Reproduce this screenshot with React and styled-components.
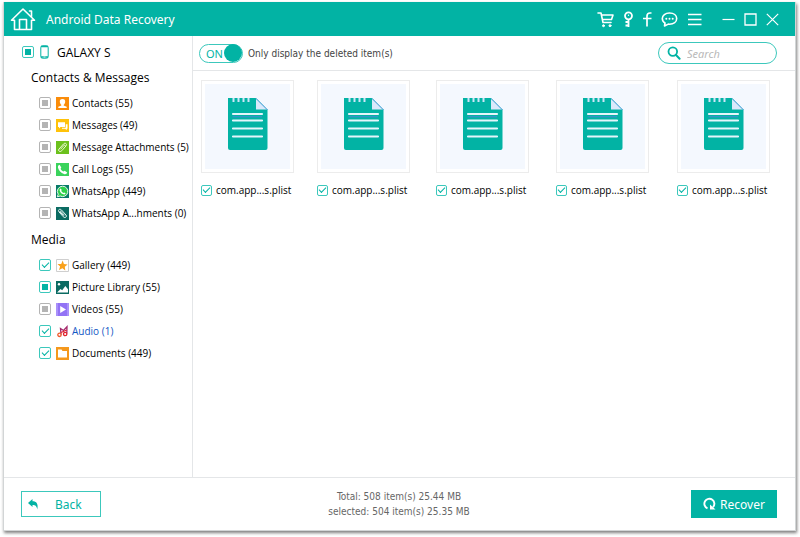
import React from 'react';
import styled, { createGlobalStyle, css } from 'styled-components';

const COLORS = {
  primary: '#02b3a4',
  primaryLight: '#3cc8bc',
  white: '#fff',
  text: '#000',
  muted: '#666',
  link: '#1257c4',
  line: '#e4e6e8',
  gray: '#b4b4b4',
};

const FONTS = {
  ui: "'Noto Sans', 'Open Sans', sans-serif",
  label: "'Open Sans', 'Noto Sans', sans-serif",
  status: "'DejaVu Sans Condensed', 'DejaVu Sans', sans-serif",
};

const CONTACT_ITEMS = [
  { id: 'contacts', label: 'Contacts (55)', state: 'none' },
  { id: 'messages', label: 'Messages (49)', state: 'none' },
  { id: 'attachments', label: 'Message Attachments (5)', state: 'none' },
  { id: 'calls', label: 'Call Logs (55)', state: 'none' },
  { id: 'whatsapp', label: 'WhatsApp (449)', state: 'none' },
  { id: 'whatsappAttachments', label: 'WhatsApp A...hments (0)', state: 'none' },
];

const MEDIA_ITEMS = [
  { id: 'gallery', label: 'Gallery (449)', state: 'checked' },
  { id: 'pictures', label: 'Picture Library (55)', state: 'partial' },
  { id: 'videos', label: 'Videos (55)', state: 'none' },
  { id: 'audio', label: 'Audio (1)', state: 'checked', active: true },
  { id: 'documents', label: 'Documents (449)', state: 'checked' },
];

const FILES = [1, 2, 3, 4, 5];

const App = () => {
  return (
    <>
      <GlobalStyle />
      <Window>
        <TitleBar>
          <HomeLink href="/" aria-label="Home">
            <HomeIcon />
          </HomeLink>
          <Title>Android Data Recovery</Title>
          <Tools>
            <IconButton aria-label="Buy"><CartIcon /></IconButton>
            <IconButton aria-label="Register"><KeyIcon /></IconButton>
            <IconButton aria-label="Facebook"><FacebookIcon /></IconButton>
            <IconButton aria-label="Feedback"><ChatIcon /></IconButton>
            <IconButton aria-label="Menu"><MenuIcon /></IconButton>
          </Tools>
          <WindowControls>
            <IconButton aria-label="Minimize"><MinimizeIcon /></IconButton>
            <IconButton aria-label="Maximize"><MaximizeIcon /></IconButton>
            <IconButton aria-label="Close"><CloseIcon /></IconButton>
          </WindowControls>
        </TitleBar>

        <Body>
          <Sidebar>
            <Device>
              <TickBox state="partial" />
              <PhoneIcon />
              GALAXY S
            </Device>
            <Category title="Contacts & Messages" items={CONTACT_ITEMS} />
            <Category title="Media" items={MEDIA_ITEMS} />
          </Sidebar>

          <Main>
            <Toolbar>
              <DeletedSwitch />
              <SearchBox>
                <SearchIcon />
                <SearchInput type="text" placeholder="Search" aria-label="Search" />
              </SearchBox>
            </Toolbar>
            <FileGrid>
              {FILES.map((id) => (
                <File key={id}>
                  <Thumb>
                    <NoteIcon />
                  </Thumb>
                  <FileLabel>
                    <TickBox state="checked" small />
                    com.app...s.plist
                  </FileLabel>
                </File>
              ))}
            </FileGrid>
          </Main>
        </Body>

        <Footer>
          <BackButton>
            <BackIcon />
            <span>Back</span>
          </BackButton>
          <Summary>
            <p>Total: 508 item(s) 25.44 MB</p>
            <p>selected: 504 item(s) 25.35 MB</p>
          </Summary>
          <RecoverButton>
            <RecoverIcon />
            Recover
          </RecoverButton>
        </Footer>
      </Window>
    </>
  );
};

const TickBox = ({ state, small, ...delegated }) => {
  const ref = React.useRef(null);

  React.useEffect(() => {
    ref.current.indeterminate = state !== 'checked';
  }, [state]);

  return (
    <Tick
      ref={ref}
      type="checkbox"
      defaultChecked={state === 'checked'}
      $muted={state === 'none'}
      $small={small}
      {...delegated}
    />
  );
};

const Category = ({ title, items }) => (
  <section>
    <CategoryTitle>{title}</CategoryTitle>
    <CategoryList>
      {items.map(({ id, label, state, active }) => (
        <li key={id}>
          <CategoryLabel $active={active}>
            <TickBox state={state} />
            <ItemIcon id={id} />
            {label}
          </CategoryLabel>
        </li>
      ))}
    </CategoryList>
  </section>
);

const DeletedSwitch = () => {
  const [on, setOn] = React.useState(true);

  return (
    <SwitchRow>
      <Switch
        id="deleted-only"
        role="switch"
        aria-checked={on}
        $on={on}
        onClick={() => setOn(!on)}
      >
        <span>{on ? 'ON' : 'OFF'}</span>
        <Knob />
      </Switch>
      <label htmlFor="deleted-only">Only display the deleted item(s)</label>
    </SwitchRow>
  );
};

/* Icons */
const HomeIcon = () => (
  <svg width="26" height="24" viewBox="0 0 26 24" fill="none" stroke="#fff" strokeWidth="1.6" strokeLinejoin="round" strokeLinecap="round">
    <path d="M1.5 13.200 L13 2 L24.500 13.200 H21.500 V22.500 H4.500 V13.200 Z" />
    <path d="M9.500 22 V12.500 H16.500 V22" />
    <path d="M19.500 4 H21.500 V9.500" />
  </svg>
);

const CartIcon = () => (
  <svg width="17" height="17" viewBox="0 0 17 17" fill="none" stroke="#fff" strokeWidth="1.6" strokeLinejoin="round" strokeLinecap="round">
    <path d="M1 2 H4 L6 11.500 H14 M4.500 4 H16 L14.500 8.500 H6" />
    <circle cx="6.500" cy="14.700" r="1" fill="#fff" strokeWidth="1" />
    <circle cx="13" cy="14.700" r="1" fill="#fff" strokeWidth="1" />
  </svg>
);

const KeyIcon = () => (
  <svg width="10" height="17" viewBox="0 0 10 17" fill="none" stroke="#fff" strokeWidth="1.8">
    <circle cx="5.500" cy="4.800" r="3.500" />
    <path d="M5.500 8 V16 M5.500 11 H2.500 M5.500 14.500 H2.500" />
    <circle cx="5.500" cy="4.200" r=".7" fill="#fff" stroke="none" />
  </svg>
);

const FacebookIcon = () => (
  <svg width="10" height="17" viewBox="0 0 10 17" fill="none" stroke="#fff" strokeWidth="1.7">
    <path d="M9.500 2 H8 Q5 2 5 5 V15.500 M1 7.500 H9.500" />
  </svg>
);

const ChatIcon = () => (
  <svg width="17" height="17" viewBox="0 0 17 17" fill="none" stroke="#fff" strokeWidth="1.6" strokeLinejoin="round">
    <path d="M8.500 2 C12.800 2 15.700 4.400 15.700 7.600 C15.700 10.900 12.600 13.200 8.500 13.200 L7.300 13.100 L3.500 15 L4 12 C2.200 11 1.300 9.400 1.300 7.600 C1.300 4.400 4.400 2 8.500 2 Z" />
    <g fill="#fff" stroke="none">
      <circle cx="5.300" cy="7.700" r="1" />
      <circle cx="8.500" cy="7.700" r="1" />
      <circle cx="11.700" cy="7.700" r="1" />
    </g>
  </svg>
);

const MenuIcon = () => (
  <svg width="15" height="17" viewBox="0 0 15 17" stroke="#fff" strokeWidth="1.7">
    <path d="M1 3.500 H14.500 M1 8.500 H14.500 M1 13.500 H14.500" />
  </svg>
);

const MinimizeIcon = () => (
  <svg width="13" height="13" viewBox="0 0 13 13" stroke="#fff" strokeWidth="1.2">
    <path d="M0.500 6.500 H12.500" />
  </svg>
);

const MaximizeIcon = () => (
  <svg width="13" height="13" viewBox="0 0 13 13" fill="none" stroke="#fff" strokeWidth="1.3">
    <path d="M1 1 H12 V12 H1 Z" />
  </svg>
);

const CloseIcon = () => (
  <svg width="13" height="13" viewBox="0 0 13 13" stroke="#fff" strokeWidth="1.2">
    <path d="M0.800 0.800 L12.200 12.200 M12.200 0.800 L0.800 12.200" />
  </svg>
);

const PhoneIcon = () => (
  <svg width="9" height="14" viewBox="0 0 9 14" fill="none" stroke={COLORS.primary}>
    <rect x=".8" y=".8" width="7.400" height="12.400" rx="1.600" strokeWidth="1" />
    <path d="M1 1.500 H8 M1 12 H8" strokeWidth="1.600" />
    <path d="M3.500 12 H5.500" stroke="#fff" strokeWidth=".8" />
  </svg>
);

const SearchIcon = () => (
  <svg width="14" height="14" viewBox="0 0 14 14" fill="none" stroke={COLORS.primary} strokeWidth="1.8" strokeLinecap="round">
    <circle cx="5.800" cy="5.600" r="4.300" />
    <path d="M9 9 L12.600 12.800" strokeWidth="2" />
  </svg>
);

const NoteIcon = () => (
  <svg width="40" height="52" viewBox="0 0 40 52">
    <path d="M0 0 H28 L39.500 11.500 V50 Q39.500 52 37.500 52 H2 Q0 52 0 50 Z" fill={COLORS.primary} />
    <path d="M28 0.500 V11.500 H39.500 Z" fill="#d9e9fb" />
    <path d="M28 0.500 L39.500 12" stroke="#4f9fdc" fill="none" />
    <path d="M5.500 0 V4 M10.500 0 V4 M15.500 0 V4 M20.500 0 V4" stroke="#cfe6fa" strokeWidth="2" />
    <path d="M4.500 18.700 H34" stroke="#3c92cc" strokeWidth="1.200" />
    <path d="M5 16 H34 M5 22.500 H34 M5 30.500 H34 M5 38.500 H34" stroke="#e4f5fb" strokeWidth="2.200" strokeLinecap="round" />
  </svg>
);

const BackIcon = () => (
  <svg width="11" height="11" viewBox="0 0 11 11" fill={COLORS.primary}>
    <path d="M0 4 L4.500 0 V2.200 C8.500 2.200 10.500 4.800 9.300 10.500 C8.800 7.200 7.500 6 4.500 6 V8 Z" />
  </svg>
);

const RecoverIcon = () => (
  <svg width="13" height="14" viewBox="0 0 13 14">
    <path d="M4.500 11.400 A5 5 0 1 1 10 10.200" fill="none" stroke="#fff" strokeWidth="1.9" />
    <path d="M12.500 12.500 H7 V7.500 Z" fill="#fff" />
  </svg>
);

const ITEM_ICONS = {
  contacts: (
    <>
      <path d="M0 0 H13 V13 H0 Z" fill="#fa8c0a" />
      <path d="M6.500 2 C8.500 2 9.400 3.300 9.200 4.900 C9 6.500 8.200 7.200 7.700 7.700 V8.500 L10.700 9.700 V11 H2.300 V9.700 L5.300 8.500 V7.700 C4.800 7.200 4 6.500 3.800 4.900 C3.600 3.300 4.500 2 6.500 2 Z" fill="#fff" />
    </>
  ),
  messages: (
    <>
      <path d="M0 0 H13 V13 H0 Z" fill="#ffc20a" />
      <path d="M2 3.200 H9 V8 H4.500 L3 9.600 V8 H2 Z" fill="#fff" />
      <path d="M9.700 5.300 H11.500 V9.800 H10.700 V11.200 L9.200 9.800 H6 V8.700 H9.700 Z" fill="#fff" />
    </>
  ),
  attachments: (
    <>
      <path d="M0 0 H13 V13 H0 Z" fill="#6cc11d" />
      <path d="M4.500 8.300 L8.200 4.200 M3 8 L7.500 3 C9.300 1.200 11.500 3 10 4.900 L5.800 9.700 C4 11.600 1.600 9.800 3 8 M8.200 4.200 C9 3.600 9.400 4.500 8.900 5" fill="none" stroke="#effad9" />
    </>
  ),
  calls: (
    <>
      <path d="M0 0 H13 V13 H0 Z" fill="#3ad35c" />
      <path d="M3.600 1.800 L5.300 4.400 L4.600 5.700 C5.200 7 6.200 8 7.400 8.500 L8.700 7.700 L11.200 9.500 C10.700 11 9.500 11.500 8 11 C5 10 2.700 7.500 2 4.800 C1.700 3.300 2.300 2.200 3.600 1.800 Z" fill="#fff" />
    </>
  ),
  whatsapp: (
    <>
      <path d="M0 0 H13 V13 H0 Z" fill="#087a68" />
      <path d="M6.600 1.200 A5.200 5.200 0 1 1 4.200 11 L1.300 11.800 L2.200 9.200 A5.200 5.200 0 0 1 6.600 1.200 Z" fill="#2ed04b" stroke="#fff" strokeWidth=".9" />
      <path d="M4.800 3.500 L5.700 5 L5.200 6 L7.200 8 L8.300 7.400 L9.700 8.400 C9 9.700 7.900 9.600 6.700 9 C5 8.200 4 6.800 3.700 5.400 C3.600 4.400 4.100 3.700 4.800 3.500 Z" fill="#fff" />
    </>
  ),
  whatsappAttachments: (
    <>
      <path d="M0 0 H13 V13 H0 Z" fill="#0b6b62" />
      <path d="M8.500 8.300 L4.800 4.200 M10 8 L5.500 3 C3.700 1.200 1.500 3 3 4.900 L7.200 9.700 C9 11.600 11.400 9.800 10 8 M4.800 4.200 C4 3.600 3.600 4.500 4.100 5 L7.500 8.700" fill="none" stroke="#e8f5f2" />
    </>
  ),
  gallery: (
    <>
      <path d="M.5 .5 H12.500 V12.500 H.5 Z" fill="#fff" stroke="#cfcfcf" />
      <path d="M6.700 1.500 L7.900 4.900 L11.600 5.600 L8.800 7.700 L9.300 11.400 L6.400 9.300 L3 11 L4.100 7.500 L1.500 5 L5.200 4.900 Z" fill="#f9a11b" />
    </>
  ),
  pictures: (
    <>
      <path d="M0 0 H13 V13 H0 Z" fill="#0b6b62" />
      <path d="M1 11.500 L4.500 8 L6.200 9.200 L9.300 5 L12 8.200 V11.500 Z" fill="#fff" />
      <circle cx="3" cy="3.200" r="1.200" fill="#fff" />
    </>
  ),
  videos: (
    <>
      <path d="M0 0 H13 V13 H0 Z" fill="#9272f5" />
      <path d="M0 0 H2 V13 H0 Z M11 0 H13 V13 H11 Z" fill="#a991fa" />
      <path d="M4.200 3 L10 6.500 L4.200 10 Z" fill="#fff" />
    </>
  ),
  audio: (
    <>
      <path d="M5 9.500 L4.500 3.500 L7.500 5.500 L11 1.800 L10.800 8.500" fill="none" stroke="#a3276c" strokeWidth="1.300" />
      <path d="M5 7.500 L10.800 5" fill="none" stroke="#e0242f" strokeWidth="1.200" />
      <circle cx="3.500" cy="9.800" r="1.700" fill="none" stroke="#f0582a" strokeWidth="1.300" />
      <circle cx="9.200" cy="9" r="1.700" fill="none" stroke="#e0242f" strokeWidth="1.300" />
    </>
  ),
  documents: (
    <>
      <path d="M0 0 H13 V13 H0 Z" fill="#f5981c" />
      <path d="M2 2.500 H5.500 L6.500 4 H11 V10.500 H2 Z" fill="#fff" />
    </>
  ),
};

const ItemIcon = ({ id }) => (
  <svg width="13" height="13" viewBox="0 0 13 13" aria-hidden="true">
    {ITEM_ICONS[id]}
  </svg>
);

const GlobalStyle = createGlobalStyle`
  *, *::before, *::after {
    box-sizing: border-box;
  }

  body {
    margin: 0;
    background: ${COLORS.white};
    color: ${COLORS.text};
    font-family: ${FONTS.ui};
    font-size: 11px;
  }

  h1, h2, p, ul {
    margin: 0;
    padding: 0;
  }

  button, input {
    font: inherit;
  }

  svg {
    display: block;
    flex-shrink: 0;
  }
`;

const Window = styled.div`
  display: flex;
  flex-direction: column;
  min-height: calc(100vh - 8px);
  margin: 2px 4px 6px 3px;
  border: 1px solid #d2d5d6;
  box-shadow: 1px 2px 3px rgba(0, 0, 0, 0.5);
`;

const TitleBar = styled.header`
  display: flex;
  align-items: center;
  height: 34px;
  padding: 0 16px 0 6px;
  margin-top: -1px;
  background: ${COLORS.primary};
  color: ${COLORS.white};
`;

const HomeLink = styled.a`
  margin-right: 10px;
`;

const Title = styled.h1`
  font-size: 12px;
  font-weight: 400;
`;

const Tools = styled.div`
  display: flex;
  align-items: center;
  gap: 9px;
  margin-left: auto;
`;

const WindowControls = styled.div`
  display: flex;
  align-items: center;
  gap: 9px;
  margin-left: 20px;
`;

const IconButton = styled.button`
  padding: 0;
  border: none;
  background: transparent;
  cursor: pointer;
`;

const Body = styled.div`
  display: flex;
  flex: 1;
`;

const Sidebar = styled.nav`
  width: 189px;
  flex-shrink: 0;
  padding-top: 3px;
  border-right: 1px solid ${COLORS.line};
  font-family: ${FONTS.label};
`;

const Device = styled.label`
  display: flex;
  align-items: center;
  gap: 6px;
  height: 26px;
  padding-left: 18px;
  font-size: 12px;

  svg {
    margin-right: 2px;
  }
`;

const CategoryTitle = styled.h2`
  padding-left: 27px;
  font-size: 12px;
  font-weight: 400;
  line-height: 26px;
`;

const CategoryList = styled.ul`
  margin: 1px 0 3px;
  list-style: none;
`;

const CategoryLabel = styled.label`
  display: flex;
  align-items: center;
  height: 22px;
  padding-left: 35px;
  font-size: 10px;
  white-space: nowrap;
  color: ${(p) => (p.$active ? COLORS.link : COLORS.text)};

  svg {
    margin: 0 3px 0 5px;
  }
`;

const Tick = styled.input`
  appearance: none;
  display: grid;
  place-content: center;
  flex-shrink: 0;
  width: 12px;
  height: 12px;
  margin: 0;
  border: 1px solid ${(p) => (p.$muted ? COLORS.gray : COLORS.primaryLight)};
  border-radius: 2px;
  background: ${COLORS.white};

  &:indeterminate::after {
    content: '';
    width: 6px;
    height: 6px;
    background: ${(p) => (p.$muted ? COLORS.gray : COLORS.primary)};
  }

  &:checked:not(:indeterminate)::after {
    content: '';
    width: 7px;
    height: 4px;
    border: solid ${COLORS.primary};
    border-width: 0 0 1px 1px;
    transform: translateY(-1px) rotate(-45deg);
  }

  ${(p) =>
    p.$small &&
    css`
      width: 11px;
      height: 11px;
    `}
`;

const Main = styled.main`
  flex: 1;
  min-width: 0;
`;

const Toolbar = styled.div`
  display: flex;
  align-items: center;
  justify-content: space-between;
  height: 35px;
  padding: 0 18px 0 6px;
  border-bottom: 1px solid ${COLORS.line};
`;

const SwitchRow = styled.div`
  display: flex;
  align-items: center;
  gap: 5px;
  color: #444;
  font-family: ${FONTS.status};
  font-size: 10px;
`;

const Switch = styled.button`
  display: flex;
  flex-direction: ${(p) => (p.$on ? 'row' : 'row-reverse')};
  align-items: center;
  justify-content: space-between;
  width: 44px;
  height: 19px;
  padding: 0 0 0 6px;
  border: 1px solid ${COLORS.primaryLight};
  border-radius: 10px;
  background: ${COLORS.white};
  color: ${COLORS.primary};
  font-family: ${FONTS.ui};
  font-size: 11px;
  cursor: pointer;
`;

const Knob = styled.span`
  width: 18px;
  height: 18px;
  border-radius: 50%;
  background: ${COLORS.primary};
`;

const SearchBox = styled.div`
  display: flex;
  align-items: center;
  gap: 6px;
  width: 119px;
  height: 22px;
  padding: 0 8px;
  border: 1px solid ${COLORS.primaryLight};
  border-radius: 11px;
`;

const SearchInput = styled.input`
  flex: 1;
  min-width: 0;
  padding: 0;
  border: none;
  outline: none;
  background: transparent;

  &::placeholder {
    color: #b9b9b9;
    font-style: italic;
  }
`;

const FileGrid = styled.div`
  display: grid;
  grid-template-columns: 116fr 119fr 120fr 121fr 93px;
  padding: 9px 25px 9px 8px;
`;

const File = styled.div`
  width: 93px;
`;

const Thumb = styled.div`
  display: grid;
  place-content: center;
  height: 93px;
  padding-bottom: 5px;
  border: 1px solid #ececec;
  outline: 3px solid ${COLORS.white};
  outline-offset: -4px;
  background: #f4f8fe;
`;

const FileLabel = styled.label`
  display: flex;
  align-items: center;
  gap: 4px;
  height: 18px;
  margin-top: 8px;
  font-family: ${FONTS.label};
  font-size: 10px;
  white-space: nowrap;
`;

const Footer = styled.footer`
  display: grid;
  grid-template-columns: 1fr auto 1fr;
  align-items: center;
  height: 53px;
  padding: 0 18px 0 17px;
  border-top: 1px solid ${COLORS.line};
`;

const Summary = styled.div`
  color: ${COLORS.muted};
  font-family: ${FONTS.status};
  font-size: 10px;
  line-height: 15px;
  text-align: center;
`;

const BackButton = styled.button`
  display: flex;
  align-items: center;
  gap: 16px;
  width: 80px;
  height: 26px;
  padding: 0 6px;
  border: 1px solid ${COLORS.primaryLight};
  background: ${COLORS.white};
  color: ${COLORS.primary};
  font-size: 12px;
  cursor: pointer;
`;

const RecoverButton = styled.button`
  display: flex;
  align-items: center;
  justify-content: center;
  justify-self: end;
  gap: 4px;
  width: 86px;
  height: 28px;
  padding: 0;
  border: none;
  background: ${COLORS.primary};
  color: ${COLORS.white};
  font-size: 12px;
  cursor: pointer;
`;

export default App;
